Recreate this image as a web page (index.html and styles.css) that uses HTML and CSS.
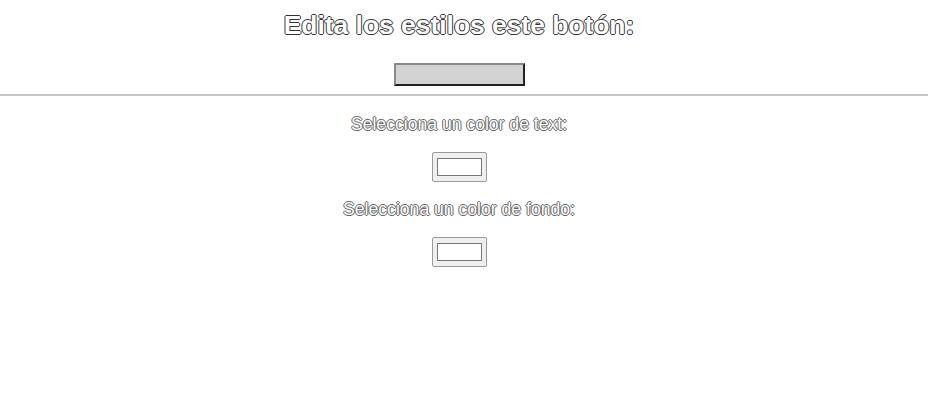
FILE: index.html
```html
<!DOCTYPE html>
<html lang="es">
<head>
<meta charset="utf-8">
<title>Editor de botón</title>
<link rel="stylesheet" href="styles.css">
</head>
<body>
<header class="header">
  <h1 class="title">Edita los estilos este botón:</h1>
  <button class="preview" type="button"></button>
</header>
<hr class="divider">
<main class="controls">
  <label class="field">
    <span class="field-label">Selecciona un color de text:</span>
    <input class="swatch" type="color" value="#ffffff">
  </label>
  <label class="field">
    <span class="field-label">Selecciona un color de fondo:</span>
    <input class="swatch" type="color" value="#ffffff">
  </label>
</main>
</body>
</html>
```

FILE: styles.css
```css
html, body {
  margin: 0;
  padding: 0;
  background: #ffffff;
}
body {
  font-family: "Liberation Sans", Arial, sans-serif;
  color: #ffffff;
}
.header {
  display: flex;
  flex-direction: column;
  align-items: center;
  padding: 10px 10px 0 0;
}
.title {
  margin: 0;
  font-size: 26.4px;
  line-height: 30px;
  font-weight: bold;
  color: #ffffff;
  text-shadow: -1px 0 #333, 1px 0 #333, 0 -1px #333, 0 1px #333;
}
.preview {
  margin-top: 23px;
  width: 131px;
  height: 23px;
  padding: 0;
  background: #d3d3d3;
  border-style: solid;
  border-width: 2px;
  border-color: #8a8a8a #222222 #222222 #8a8a8a;
}
.divider {
  margin: 8px 0 0;
  border: none;
  border-top: 2px solid #c8c8c8;
  height: 0;
}
.controls {
  display: flex;
  flex-direction: column;
  align-items: center;
  padding: 18px 10px 0 0;
}
.field {
  display: flex;
  flex-direction: column;
  align-items: center;
  gap: 18px;
  margin-bottom: 17px;
}
.field-label {
  font-size: 17.6px;
  line-height: 20px;
  color: #ffffff;
  text-shadow: -1px 0 #666, 1px 0 #666, 0 -1px #666, 0 1px #666;
}
.swatch {
  box-sizing: border-box;
  width: 55px;
  height: 30px;
  margin: 0;
  padding: 1px 2px;
  background: #efefef;
  border: 1px solid #9a9a9a;
  border-radius: 2px;
}
```
